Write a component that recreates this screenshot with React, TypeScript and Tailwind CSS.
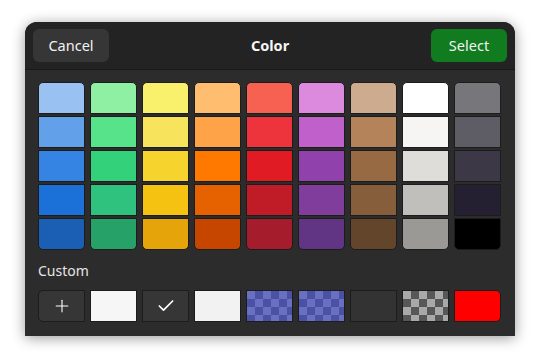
import { Plus, Check } from "lucide-react";

const palette = [
  ["#99c1f1", "#62a0ea", "#3584e4", "#1c71d8", "#1a5fb4"],
  ["#8ff0a4", "#57e389", "#33d17a", "#2ec27e", "#26a269"],
  ["#f9f06b", "#f8e45c", "#f6d32d", "#f5c211", "#e5a50a"],
  ["#ffbe6f", "#ffa348", "#ff7800", "#e66100", "#c64600"],
  ["#f66151", "#ed333b", "#e01b24", "#c01c28", "#a51d2d"],
  ["#dc8add", "#c061cb", "#9141ac", "#813d9c", "#613583"],
  ["#cdab8f", "#b5835a", "#986a44", "#865e3c", "#63452c"],
  ["#ffffff", "#f6f5f4", "#deddda", "#c0bfbc", "#9a9996"],
  ["#77767b", "#5e5c64", "#3d3846", "#241f31", "#000000"],
];

const font = { fontFamily: '"Noto Sans", "Open Sans", sans-serif' };

export default function App() {
  return (
    <div className="w-[540px] h-[364px] bg-white pt-[22px] pl-[25px] overflow-hidden" style={font}>
      <div className="w-[490px] h-[314px] rounded-t-[12px] bg-[#2c2c2c] shadow-[0_2px_14px_rgba(0,0,0,0.4)] flex flex-col overflow-hidden">
        {/* Header */}
        <div className="h-[48px] bg-[#232323] border-b border-[#191919] flex items-center justify-between px-[8px]">
          <button className="w-[76px] h-[33px] rounded-[6px] bg-[#363636] text-[#f2f2f2] text-[14.5px]">
            Cancel
          </button>
          <span className="text-[#f6f6f6] text-[14.5px] font-bold">Color</span>
          <button className="w-[76px] h-[33px] rounded-[6px] bg-[#107b1f] text-[#f2f2f2] text-[14.5px]">
            Select
          </button>
        </div>

        {/* Body */}
        <div className="flex flex-col px-[13px] pt-[12px]">
          <div className="flex gap-[5px]">
            {palette.map((col, ci) => (
              <div key={ci} className="flex flex-col gap-[2px]">
                {col.map((c, ri) => (
                  <div
                    key={c}
                    className={
                      "w-[47px] h-[32px] border border-[#1c1c1c] " +
                      (ri === 0 ? "rounded-t-[5px]" : ri === col.length - 1 ? "rounded-b-[5px]" : "")
                    }
                    style={{ backgroundColor: c }}
                  />
                ))}
              </div>
            ))}
          </div>

          <div className="mt-[11px] text-[14px] text-[#e6e6e6] leading-[20px]">Custom</div>

          <div className="mt-[9px] flex gap-[5px]">
            <div className="w-[47px] h-[32px] border border-[#1c1c1c] rounded-l-[5px] bg-[#363636] flex items-center justify-center text-white">
              <Plus size={20} strokeWidth={1.3} />
            </div>
            <div className="w-[47px] h-[32px] border border-[#1c1c1c] bg-[#f6f6f6]" />
            <div className="w-[47px] h-[32px] border border-[#1c1c1c] bg-[#363636] flex items-center justify-center text-white">
              <Check size={20} strokeWidth={2} />
            </div>
            <div className="w-[47px] h-[32px] border border-[#1c1c1c] bg-[#f2f2f2]" />
            <div className="w-[47px] h-[32px] border border-[#1c1c1c] bg-[repeating-conic-gradient(#4b52a3_0%_25%,#6a70c1_0%_50%)] [background-size:16px_16px]" />
            <div className="w-[47px] h-[32px] border border-[#1c1c1c] bg-[repeating-conic-gradient(#4b52a3_0%_25%,#6a70c1_0%_50%)] [background-size:16px_16px]" />
            <div className="w-[47px] h-[32px] border border-[#1c1c1c] bg-[#333333]" />
            <div className="w-[47px] h-[32px] border border-[#1c1c1c] bg-[repeating-conic-gradient(#575757_0%_25%,#a9a9a9_0%_50%)] [background-size:16px_16px]" />
            <div className="w-[47px] h-[32px] border border-[#1c1c1c] rounded-r-[5px] bg-[#ff0000]" />
          </div>
        </div>
      </div>
    </div>
  );
}
